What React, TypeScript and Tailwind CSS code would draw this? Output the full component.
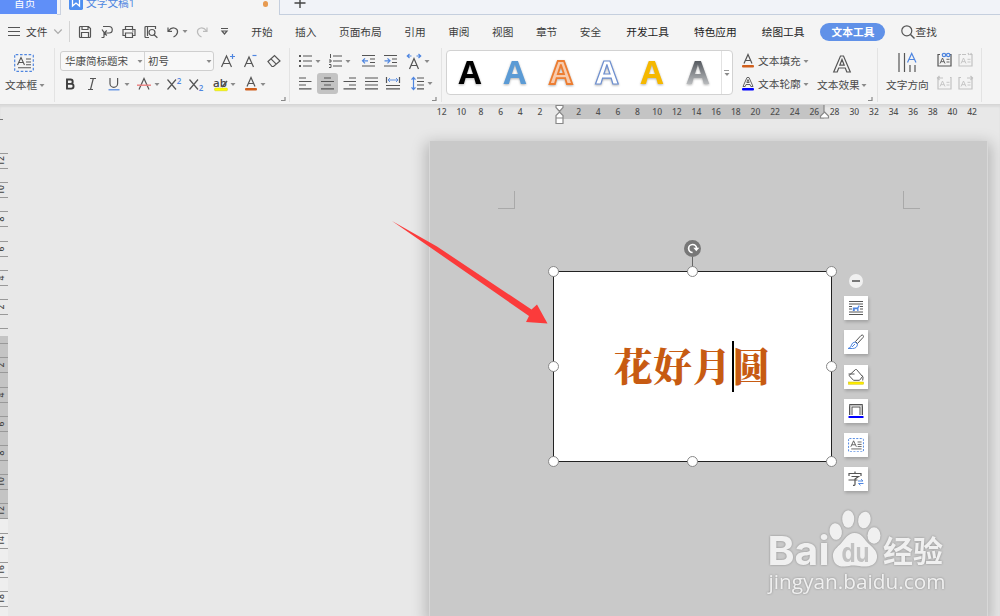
import type { ReactNode } from "react";
import clsx from "clsx";

const Icon = ({
  w,
  h,
  className,
  children,
}: {
  w: number;
  h: number;
  className?: string;
  children: ReactNode;
}) => (
  <svg
    width={w}
    height={h}
    viewBox={`0 0 ${w} ${h}`}
    fill="none"
    stroke="#555"
    strokeWidth="1.2"
    className={clsx("shrink-0 overflow-visible", className)}>
    {children}
  </svg>
);

const Caret = ({ className }: { className?: string }) => (
  <Icon w={4} h={3} className={className}>
    <path d="M-0.5 0h5L2 2.900z" fill="#8a8a8a" stroke="none" />
  </Icon>
);

const Letter = ({
  x,
  y,
  size,
  fill = "#4a4a4a",
  children,
}: {
  x: number;
  y: number;
  size: number;
  fill?: string;
  children: string;
}) => (
  <text x={x} y={y} fontSize={size} fontWeight="600" fill={fill} stroke="none" textAnchor="middle">
    {children}
  </text>
);

const CornerMark = ({ className }: { className?: string }) => (
  <Icon w={4} h={4} className={className}>
    <path d="M4 0v3.5H0" stroke="#888" />
  </Icon>
);

const Divider = ({ className }: { className?: string }) => (
  <div className={clsx("w-px h-[54px] shrink-0 bg-[#e3e3e3]", className)} />
);

const TextBoxIcon = ({ className }: { className?: string }) => (
  <svg
    viewBox="0 0 20 18"
    fill="none"
    className={clsx("shrink-0", className)}>
    <rect x="0.7" y="0.7" width="18.6" height="16.6" rx="1" stroke="#4f86e0" strokeWidth="1.2" strokeDasharray="2.6 1.7" />
    <path d="M3.5 11L7 3.5 10.5 11M4.8 8.5h4.4M12 5h5M12 8h5M12 10.7h5M4 13.7h13" stroke="#555" strokeWidth="1.1" />
  </svg>
);

/* ===== TAB BAR ===== */
const TabBar = () => (
  <div className="flex h-[15px] shrink-0 overflow-hidden bg-[#f1f3f8]">
    <div className="h-[14px] w-[57px] bg-[#5f8ff8] pl-[14px] leading-[7px] text-white">
      首页
    </div>
    <div className="h-[15px] w-1 border-r border-b border-[#cbd2df]" />
    <div className="flex w-[218px] items-start bg-[#f4f4f4] pl-2 text-[#4f86e0]">
      <Icon w={14} h={10}>
        <path d="M0 0h14v8.6q0 1.4-1.4 1.4H1.4Q0 10 0 8.6z" fill="#4f8ff0" stroke="none" />
        <path d="M3.5 0v6l3.5-3 3.5 3V0" stroke="#fff" strokeWidth="1.3" />
      </Icon>
      <span className="ml-[3px] leading-[7px]">文字文稿1</span>
      <span className="mt-[1px] mr-[11px] ml-auto size-[5.5px] rounded-full bg-[#e79a50]" />
    </div>
    <div className="flex-1 border-b border-l border-[#c5cfde] pl-[14px]">
      <Icon w={12} h={8}>
        <path d="M0.5 3h11M6 0v8" stroke="#444" strokeWidth="1.4" />
      </Icon>
    </div>
  </div>
);

/* ===== MENU ROW ===== */
const menuMain = ["开始", "插入", "页面布局", "引用", "审阅", "视图", "章节", "安全"];
const menuTools = ["开发工具", "特色应用", "绘图工具"];

const MenuRow = () => (
  <div className="flex h-[33px] shrink-0 items-center pl-2 text-[#3d3d3d]">
    <Icon w={12} h={9}>
      <path d="M0 0.5h12M0 4.5h12M0 8.5h12" />
    </Icon>
    <span className="ml-[6px]">文件</span>
    <Icon w={8} h={5} className="ml-[7px]">
      <path d="M0.3 0.5L4 4.3 7.7 0.5" stroke="#aaa" />
    </Icon>
    <div className="ml-[7px] h-[21px] w-px bg-[#d4d4d4]" />
    <div className="ml-2 flex items-center gap-2">
      <Icon w={14} h={14}>
        <path d="M1.5 2.5q0-1 1-1h8l2 2v8q0 1-1 1h-9q-1 0-1-1zM4 1.5v3h6v-3M3.5 12.5v-5h7v5" />
      </Icon>
      <Icon w={14} h={14}>
        <path d="M3 1.500h6a3 3 0 0 1 0 6.500H4M2 4.500L4 7.500v5M1.500 12.500H4M6.800 5.500L4.200 8l2.600 2.500" />
      </Icon>
      <Icon w={14} h={14}>
        <path d="M3.500 4V1.500h7V4M3.500 10.500H1V4.500h12v6h-2.500M3.500 8h7v4.500h-7zM10 6h1.500" />
      </Icon>
      <Icon w={14} h={14}>
        <path d="M5 12.500H2q-1 0-1-1v-9q0-1 1-1h9.500V4M9.800 9.500l3.600 3.300M3.500 2v9" />
        <circle cx="8" cy="7.500" r="3" />
      </Icon>
      <Icon w={12} h={14} className="ml-px">
        <path d="M1 2.500v3.800h4M1.300 6Q4.500 2 8 3.300c4 1.600 3.200 6.200-1.500 8.700" />
      </Icon>
    </div>
    <Caret className="ml-[4px]" />
    <Icon w={12} h={14} className="ml-[8.500px]">
      <path d="M11 2.500v3.800H7M10.700 6Q7.500 2 4 3.300C0 4.900.8 9.500 5.500 12" stroke="#bbb" />
    </Icon>
    <Icon w={7} h={7} className="ml-[13.500px]">
      <path d="M0 0.500h7M1 3l2.500 3L6 3z" />
    </Icon>
    <div className="ml-[22.800px] flex gap-[22.5px]">
      {menuMain.map((m) => (
        <span key={m}>{m}</span>
      ))}
    </div>
    <div className="ml-[25px] flex gap-[25px] text-[#222]">
      {menuTools.map((m) => (
        <span key={m}>{m}</span>
      ))}
    </div>
    <div className="ml-[16px] flex h-[18px] w-[65px] items-center justify-center rounded-full bg-[#6091e8] font-bold text-white">
      文本工具
    </div>
    <Icon w={14} h={14} className="ml-4">
      <circle cx="5.800" cy="5.800" r="5" />
      <path d="M9.500 9.500l4 4" strokeWidth="1.400" />
    </Icon>
    <span>查找</span>
  </div>
);

/* ===== RIBBON ===== */
const FontGroup = () => (
  <div className="flex w-[235px] flex-col">
    <div className="mt-[3px] flex h-5 items-center pl-[5px]">
      <div className="flex h-5 w-[154px] items-center rounded-[3px] border border-[#cfcfcf] bg-[#f8f8f8] text-[10.5px]">
        <span className="ml-1 w-[74px]">华康简标题宋</span>
        <Caret className="-ml-px" />
        <div className="ml-[2px] h-full w-px bg-[#d4d4d4]" />
        <span className="ml-[3px] w-[59px]">初号</span>
        <Caret />
      </div>
      <Icon w={14} h={14} className="ml-[7px]">
        <path d="M0.500 13L5.500 2l5 11M2.300 9.500h6.500" />
        <path d="M11.500 0v5M9 2.500h5" stroke="#4f86e0" />
      </Icon>
      <Icon w={14} h={14} className="ml-[9px]">
        <path d="M0.500 13L5 3l4.500 10M2.200 9.500h5.800" />
        <path d="M8.500 1.500h4" stroke="#4f86e0" />
      </Icon>
      <Icon w={14} h={14} className="ml-[9px]">
        <path d="M1 7.500l6.500-6 5.500 5.500-6.500 5.500H5zM4 4.800l5.500 5.500" />
      </Icon>
    </div>
    <div className="mt-[6px] flex h-[14px] items-center pl-[9px]">
      <Icon w={12} h={14}>
        <path d="M3 2.500h3.500a2.200 2.200 0 0 1 0 4.400H3zM3 6.900h4.200a2.300 2.300 0 0 1 0 4.700H3z" strokeWidth="1.900" stroke="#3d3d3d" />
      </Icon>
      <Icon w={12} h={14} className="ml-[10px]">
        <path d="M4 1.500h6M2 12.500h5M7.300 1.500l-2.800 11" />
      </Icon>
      <Icon w={12} h={14} className="ml-[10px]">
        <path d="M2 1v5.500a3.800 3.800 0 0 0 7.600 0V1" />
        <path d="M0.500 12.800h11" stroke="#4f86e0" />
      </Icon>
      <Caret className="ml-[5px]" />
      <Icon w={14} h={14} className="ml-[8px]">
        <path d="M2 12.500L7 1.500l5 11" />
        <path d="M0 8.200h14" stroke="#ea7f7f" strokeWidth="1.400" />
      </Icon>
      <Caret className="ml-[4px]" />
      <Icon w={14} h={14} className="ml-[8px]">
        <path d="M0.500 2.500l8.500 10M9 2.500l-8.500 10" />
        <Letter x={12} y={6.500} size={8} fill="#4f86e0">2</Letter>
      </Icon>
      <Icon w={14} h={14} className="ml-[8px]">
        <path d="M0.500 2.500l8.500 10M9 2.500l-8.500 10" />
        <Letter x={12} y={14} size={8} fill="#4f86e0">2</Letter>
      </Icon>
      <Icon w={14} h={14} className="ml-[11px]">
        <Letter x={6} y={9.500} size={11.500}>ab</Letter>
        <path d="M8 10l5-6" strokeWidth="1.500" />
        <rect x="0.500" y="11" width="13" height="2.800" rx="1" fill="#ffff00" stroke="#c6c600" strokeWidth="0.400" />
      </Icon>
      <Caret className="ml-[3px]" />
      <Icon w={12} h={14} className="ml-[10px]">
        <path d="M2 9.500L6 0.500l4 9M3.300 6.500h5.500" />
        <rect x="0" y="11" width="12" height="2.600" rx="1" fill="#d05f1c" stroke="none" />
      </Icon>
      <Caret className="ml-[4px]" />
    </div>
    <CornerMark className="mt-[6px] ml-[226px]" />
  </div>
);

const ParagraphGroup = () => (
  <div className="flex w-[151px] flex-col">
    <div className="mt-[3px] flex h-5 items-center pl-[8.500px]">
      <Icon w={13} h={14}>
        <path d="M4 2h9M4 7h9M4 12h9" />
        <path d="M0 2h2M0 7h2M0 12h2" strokeWidth="2" />
      </Icon>
      <Caret className="ml-[4px]" />
      <Icon w={13} h={14} className="ml-[9px]">
        <path d="M4 2h9M4 7h9M4 12h9" />
        <path d="M1.500 0v4M0 6h2v2H0M0 10.500h2v3H0" strokeWidth="1" />
      </Icon>
      <Caret className="ml-[4px]" />
      <Icon w={13} h={14} className="ml-[12px]">
        <path d="M0 1.500h13M8 5h5M8 8.500h5M0 12h13" />
        <path d="M6 6.800H0.800M3 4.300L0.500 6.800 3 9.300" stroke="#4f86e0" />
      </Icon>
      <Icon w={13} h={14} className="ml-[9px]">
        <path d="M0 1.500h13M8 5h5M8 8.500h5M0 12h13" />
        <path d="M0.500 6.800h5.200M3.500 4.300L6 6.800 3.500 9.300" stroke="#4f86e0" />
      </Icon>
      <Icon w={14} h={15} className="ml-[10.500px]">
        <path d="M2.500 15L7 4.500 11.500 15M4 11.500h6" />
        <path d="M0 2h4.500M2.500 0L0.300 2l2.200 2M9.500 2H14M11.500 0l2.200 2-2.200 2" stroke="#4f86e0" />
      </Icon>
      <Caret className="ml-[4px]" />
    </div>
    <div className="mt-[2px] flex h-[21px] items-center pl-[8.500px]">
      <Icon w={13} h={13}>
        <path d="M0 1h7M0 4.500h12.500M0 8h7M0 11.800h12.500" />
      </Icon>
      <div className="ml-[5px] flex size-[21px] items-center justify-center rounded-[3px] bg-[#c3c3c3]">
        <Icon w={13} h={13}>
          <path d="M3 1h7M0 4.500h13M3 8h7M0 11.800h13" />
        </Icon>
      </div>
      <Icon w={13} h={13} className="ml-[5px]">
        <path d="M6 1h7M0.500 4.500H13M6 8h7M0.500 11.800H13" />
      </Icon>
      <Icon w={13} h={13} className="ml-[9px]">
        <path d="M0 1h13M0 4.500h13M0 8h13M0 11.800h13" />
      </Icon>
      <Icon w={14} h={13} className="ml-[8px]">
        <path d="M0.500 0v6M13.500 0v6M0 8.500h14M0 11.800h14" />
        <path d="M2 3h10M4 1L2 3l2 2M10 1l2 2-2 2" stroke="#4f86e0" strokeWidth="0.900" />
      </Icon>
      <Icon w={13} h={13} className="ml-[11px]">
        <path d="M6 1h7M6 4.500h7M6 8h7M6 11.800h7" />
        <path d="M2.500 0.500v12M0.500 2.700l2-2.200 2 2.200M0.500 10.300l2 2.200 2-2.200" stroke="#4f86e0" />
      </Icon>
      <Caret className="ml-[4px]" />
    </div>
    <CornerMark className="mt-[3px] ml-[142px]" />
  </div>
);

const artStyles = [
  { fill: "#000", stroke: "#000", width: 0 },
  { fill: "#5b9bd5", stroke: "#5b9bd5", width: 0 },
  { fill: "#f8cbad", stroke: "#ed7d31", width: 1.8 },
  { fill: "#fff", stroke: "#6d8fd0", width: 1.2 },
  { fill: "#f5b800", stroke: "#f5b800", width: 0 },
  { fill: "url(#steel)", stroke: "none", width: 0 },
];

const ArtGallery = () => (
  <div className="mt-[2px] ml-[4px] flex h-[45px] w-[287px] rounded-[4px] border border-[#d2d2d2] bg-white">
    {artStyles.map((s, i) => (
      <div key={i} className="flex w-[45.600px] items-center justify-center">
        <svg
          width="28"
          height="44"
          viewBox="0 0 28 44"
          className="overflow-visible drop-shadow-[0_1px_1px_rgba(0,0,0,0.3)]">
          <defs>
            <linearGradient id="steel" x1="0" y1="0" x2="0" y2="1">
              <stop offset="0.250" stopColor="#50545a" />
              <stop offset="0.850" stopColor="#c4c6c8" />
            </linearGradient>
          </defs>
          <text
            x="14"
            y="32.500"
            fontSize="33"
            fontWeight="700"
            textAnchor="middle"
            fill={s.fill}
            stroke={s.stroke}
            strokeWidth={s.width}>
            A
          </text>
        </svg>
      </div>
    ))}
    <div className="flex flex-1 flex-col items-center justify-center gap-[2px] border-l border-[#e2e2e2]">
      <span className="h-px w-[5px] bg-[#999]" />
      <Caret />
    </div>
  </div>
);

const ArtGroup = () => (
  <div className="flex w-[145px]">
    <div className="mt-[5px] flex w-[75px] shrink-0 flex-col gap-[7px] pl-[9px]">
      <div className="flex h-4 items-center whitespace-nowrap">
        <Icon w={12} h={14}>
          <path d="M2 9.500L6 0.500l4 9M3.300 6.500h5.500" />
          <rect x="0" y="11" width="12" height="2.600" rx="1" fill="#d05f1c" stroke="none" />
        </Icon>
        <span className="ml-1">文本填充</span>
        <Caret className="ml-[3px]" />
      </div>
      <div className="flex h-4 items-center whitespace-nowrap">
        <Icon w={12} h={14}>
          <path d="M1 9.500L5 0.500h2l4 9H8.800L8 7.500H4l-.8 2zM4.800 5.500h2.400L6 2.500z" strokeWidth="0.900" />
          <rect x="0" y="11" width="12" height="2.600" rx="1" fill="#0000ff" stroke="none" />
        </Icon>
        <span className="ml-1">文本轮廓</span>
        <Caret className="ml-[3px]" />
      </div>
    </div>
    <div className="flex flex-1 flex-col pl-[9px]">
      <Icon w={18} h={18} className="mt-[7px] ml-[16px]">
        <path d="M0.700 17L7.500 1h3l6.800 16h-3.500l-1.500-4H5.700l-1.500 4zM6.800 10.200h4.400L9 4.500z" />
      </Icon>
      <div className="mt-[4px] flex h-4 items-center whitespace-nowrap">
        <span>文本效果</span>
        <Caret className="ml-[2px]" />
      </div>
      <CornerMark className="mt-[4px] ml-[51px]" />
    </div>
  </div>
);

const LinkIcon = ({ kind }: { kind: "link" | "unlink" | "prev" | "next" }) => {
  const color = kind === "link" ? "#555" : "#c2c2c2";
  return (
    <Icon w={15} h={14}>
      <path d="M3 1.500H1v11.500h13V1.500h-1" stroke={color} />
      <path d="M3 10.500L5.500 5 8 10.500M4 8.700h3M9.500 6.300h3M9.500 9h3" stroke={color} strokeWidth="0.900" />
      {kind === "link" && (
        <>
          <circle cx="7" cy="2" r="1.700" stroke="#4f86e0" />
          <circle cx="11.200" cy="2" r="1.700" stroke="#4f86e0" />
        </>
      )}
      {kind === "unlink" && <path d="M4 1.500h4M10 0l1 2M13.500 0l-1.500 2" stroke={color} />}
      {kind === "prev" && <path d="M0.500 2H6M2.500 0l-2 2 2 2" stroke={color} />}
      {kind === "next" && <path d="M9 2h5.500M12.500 0l2 2-2 2" stroke={color} />}
    </Icon>
  );
};

const Ribbon = () => (
  <div className="flex h-[57px] shrink-0 border-b border-[#d6d6d6] text-[#4a4a4a]">
    <div className="flex w-[54px] flex-col pl-[5px]">
      <TextBoxIcon className="mt-[6px] ml-[9px] h-[18px] w-5" />
      <div className="mt-[5px] flex h-4 items-center">
        <span>文本框</span>
        <Caret className="ml-[3px]" />
      </div>
    </div>
    <Divider />
    <FontGroup />
    <Divider className="-ml-px" />
    <ParagraphGroup />
    <Divider />
    <ArtGallery />
    <ArtGroup />
    <Divider className="-ml-px" />
    <div className="flex w-[103px]">
      <div className="flex w-[58px] flex-col pl-[8px]">
        <Icon w={20} h={20} className="mt-[5px] ml-[12px]">
          <path d="M1 0v19M6.500 0v19M12 12v7M17 12v7" strokeWidth="1.200" />
          <path d="M9.500 9.500L13.700 0.500 18 9.500M11 6.500h5.500" stroke="#4f86e0" />
        </Icon>
        <span className="mt-[4px] leading-4 whitespace-nowrap">文字方向</span>
      </div>
      <div className="mt-[5px] ml-px grid h-[37px] grid-cols-2 content-between gap-x-[6px]">
        <LinkIcon kind="link" />
        <LinkIcon kind="unlink" />
        <LinkIcon kind="prev" />
        <LinkIcon kind="next" />
      </div>
    </div>
    <Divider />
  </div>
);

/* ===== RULERS ===== */
const range = (from: number, to: number, step: number) => {
  const out: number[] = [];
  for (let n = from; step > 0 ? n <= to : n >= to; n += step) out.push(n);
  return out;
};

const Ticks = ({ values }: { values: number[] }) => (
  <>
    {values.map((n) => (
      <span key={n} className="w-[19.650px] shrink-0 text-center">
        {n}
      </span>
    ))}
  </>
);

const TopRuler = () => (
  <div className="relative flex h-[14px] shrink-0 font-['Noto_Sans',sans-serif] text-[8.500px] leading-[13px] font-medium text-[#505050]">
    <div className="flex w-[560px] justify-end pr-[10.300px]">
      <Ticks values={range(12, 2, -2)} />
    </div>
    <div className="flex w-[264px] bg-[#c4c4c4] pl-[8.800px]">
      <Ticks values={range(2, 26, 2)} />
    </div>
    <div className="flex flex-1 pl-[0.800px]">
      <Ticks values={range(28, 42, 2)} />
    </div>
    <Icon w={9} h={19} className="absolute top-0 left-[555px]">
      <path d="M1 0.500h7v2L4.500 6.500 1 2.500zM4.500 7L8 10.500V13H1v-2.500zM1 13h7v5.500H1z" fill="#fff" stroke="#888" />
    </Icon>
    <Icon w={9} h={14} className="absolute top-0 left-[820px]">
      <path d="M4 0v7" stroke="#888" />
      <path d="M4.500 7L8.500 11v2h-8v-2z" fill="#fff" stroke="#888" />
    </Icon>
  </div>
);

const sideTicks = [...range(12, 0, -2), ...range(2, 18, 2)];

const SideRuler = () => (
  <div className="w-2 shrink-0 overflow-hidden bg-[linear-gradient(#e8e8e8_217px,#c4c4c4_217px,#c4c4c4_399px,#eeeeee_399px)] font-['Noto_Sans',sans-serif] text-[8.500px] font-medium text-[#444]">
    <div className="h-[27.500px]">
      <div className="h-px w-[3px] bg-[#777]" />
    </div>
    {sideTicks.map((n, i) => (
      <div key={i} className="flex h-[29.200px] items-center">
        <div className="flex h-4 w-2 items-center border-y border-[#999]">
          <span className="-ml-[5px] w-3 shrink-0 -rotate-90 text-center leading-3">
            {n || ""}
          </span>
        </div>
      </div>
    ))}
  </div>
);

/* ===== TEXT BOX ON THE PAGE ===== */
const handles = [
  "-left-[6px] -top-[6px]",
  "left-[133px] -top-[6px]",
  "-right-[6px] -top-[6px]",
  "-left-[6px] top-[89px]",
  "-right-[6px] top-[89px]",
  "-left-[6px] -bottom-[6px]",
  "left-[133px] -bottom-[6px]",
  "-right-[6px] -bottom-[6px]",
];

const ShapeBox = () => (
  <div className="absolute top-[130px] left-[123px] flex h-[191px] w-[279px] items-center justify-center border border-[#222] bg-white">
    <div className="absolute -top-[15px] left-[138px] h-3 w-px bg-[#666]" />
    <svg viewBox="0 0 17 17" className="absolute -top-[32px] left-[130px] size-[17px]">
      <circle cx="8.500" cy="8.500" r="8.500" fill="#777" />
      <path d="M8.600 12.500a4 4 0 1 1 4-4.200" fill="none" stroke="#fff" strokeWidth="1.700" />
      <path d="M9.300 7.700h6l-3 3.600z" fill="#fff" />
    </svg>
    {handles.map((pos) => (
      <span
        key={pos}
        className={clsx("absolute size-[11px] rounded-full border border-[#888] bg-white", pos)}
      />
    ))}
    <span className="-mt-[3px] font-['Noto_Serif_CJK_SC','Noto_Serif_SC','Noto_Sans_CJK_SC',serif] text-[38.500px] leading-none font-black tracking-[0.800px] whitespace-nowrap text-[#c75b12]">
      花好月圆
    </span>
    <div className="absolute top-[69px] left-[178px] h-[51px] w-[2px] bg-black" />
  </div>
);

const sideTools = [
  <svg viewBox="0 0 24 24" fill="none" stroke="#555">
    <path d="M5 5.500h14M5 8h14M5 16h14M5 18.500h14M5 10.500h3M5 13h3M16 10.500h3M16 13h3" />
    <path d="M8.800 15v-3.500h4.500l1.500-2.300 1 .8-1.300 2V15h-1.300v-1.800h-2.400V15z" fill="#4f86e0" stroke="none" />
  </svg>,
  <svg viewBox="0 0 24 24" fill="none" stroke="#555">
    <path d="M11.500 11.500L17 5.500q1.500-1 2.200 0t-.2 2l-5.500 6z" />
    <path d="M4 18.500q3-.5 3.500-3.500.5-2.500 3.500-3l2.500 2.200q-.5 4.300-5 4.300zM8 17l3-3" stroke="#4f86e0" />
  </svg>,
  <svg viewBox="0 0 24 24" fill="none" stroke="#555">
    <path d="M4.500 9h6M11.500 4.500L5 10.500l4.500 4.800h6l3-3.800-6-7zM18.200 10.500q1.500 1.500 .5 5" />
    <rect x="4.500" y="17" width="15" height="2.200" fill="#ffef00" stroke="#c9b800" strokeWidth="0.500" />
  </svg>,
  <svg viewBox="0 0 24 24" fill="none" stroke="#555">
    <path d="M5.500 16V5.500h13V16M8 16V8h8v8" />
    <path d="M5.500 6.800h13M6.800 6v10M17.200 6v10" stroke="#aaa" />
    <path d="M4.500 18h15" stroke="#0000ff" strokeWidth="2" />
  </svg>,
  <TextBoxIcon />,
  <svg viewBox="0 0 24 24" fill="none" stroke="#555">
    <path d="M5 9V6.500h12V9M11 4.500v2M7.500 9.500h7L11 12v5.500q0 1-2 .8M4.500 13h9" strokeWidth="1.200" />
    <path d="M14 14h5l-2-1.800M19.500 16.500h-5l2 1.800" stroke="#4f86e0" />
  </svg>,
];

const SideTools = () => (
  <div className="absolute top-[133px] left-[414px] flex w-6 flex-col items-center">
    <div className="flex size-[14px] items-center justify-center rounded-full bg-[#f0f0f0]">
      <span className="h-[1.500px] w-2 bg-[#777]" />
    </div>
    <div className="mt-[8px] flex flex-col gap-[10.300px]">
      {sideTools.map((icon, i) => (
        <div
          key={i}
          className={clsx(
            "flex size-6 items-center justify-center bg-white shadow-[1px_2px_3px_rgba(0,0,0,0.2)]",
            i === 4 ? "px-[4px]" : ""
          )}>
          {icon}
        </div>
      ))}
    </div>
  </div>
);

const Watermark = () => (
  <svg
    viewBox="0 0 190 90"
    className="absolute top-[364px] left-[333.500px] h-[90px] w-[190px] drop-shadow-[0_0_1px_rgba(0,0,0,0.3)]"
    fill="#f0f0f0">
    <text x="3.500" y="60" fontSize="40" fontWeight="700" textLength="62" lengthAdjust="spacingAndGlyphs" className="font-['Inter',sans-serif]">
      Bai
    </text>
    <ellipse cx="71.700" cy="26.500" rx="6.200" ry="8.300" transform="rotate(-8 71.700 26.500)" />
    <ellipse cx="84.200" cy="14" rx="6" ry="8.700" />
    <ellipse cx="100.400" cy="15" rx="6.200" ry="8.400" transform="rotate(12 100.400 15)" />
    <ellipse cx="110" cy="30.500" rx="6.500" ry="8.300" />
    <path d="M90.500 28c-7 0-10 7-14.500 11.500C71 44 68.500 47 69 52c.6 7 5.500 10 11.500 9.500 4-.4 6-1.200 10-1 4 .1 7 1.400 11.500 1 7-.5 11.500-4 11-11-.4-5-4.500-8-8-11.500C100 34.500 98 28 90.500 28z" />
    <text x="77.500" y="56.500" fontSize="26" fontWeight="700" fill="#c2c2c2" textLength="28" lengthAdjust="spacingAndGlyphs" className="font-['Inter',sans-serif]">
      du
    </text>
    <text x="119" y="57" fontSize="30" fontWeight="700" className="font-['Noto_Sans_CJK_SC',sans-serif]">
      经验
    </text>
    <text x="4.500" y="84" fontSize="19.500" textLength="177" lengthAdjust="spacingAndGlyphs">
      jingyan.baidu.com
    </text>
  </svg>
);

const Page = () => (
  <div className="relative mt-[22px] ml-[421px] w-[559px] shrink-0 border-x border-[#d8d8d8] bg-[#c9c9c9] shadow-[0_5px_14px_3px_rgba(0,0,0,0.22)]">
    <div className="absolute top-[50px] left-[68px] h-[18px] w-[17px] border-r border-b border-[#a9a9a9]" />
    <div className="absolute top-[50px] left-[473px] h-[18px] w-[17px] border-b border-l border-[#a9a9a9]" />
    <ShapeBox />
    <SideTools />
    <Watermark />
  </div>
);

const App = () => (
  <div className="relative flex h-[616px] w-[1000px] flex-col overflow-hidden bg-[#f4f4f4] font-['Open_Sans','Noto_Sans_CJK_SC',sans-serif] text-[10.700px] leading-4">
    <TabBar />
    <MenuRow />
    <Ribbon />
    <div className="flex min-h-0 flex-1 flex-col bg-[#e8e8e8] shadow-[inset_0_2px_2px_rgba(0,0,0,0.06)]">
      <TopRuler />
      <div className="flex min-h-0 flex-1">
        <SideRuler />
        <Page />
      </div>
    </div>
    <svg viewBox="0 0 156 104" className="absolute top-[221px] left-[392px] h-[104px] w-[156px]" fill="#fb3b3b">
      <path d="M0 0L45 25.500 139.500 88.500 145 83.500 155.500 102.500 134 101 137 95 42 29z" />
    </svg>
  </div>
);

export default App;
